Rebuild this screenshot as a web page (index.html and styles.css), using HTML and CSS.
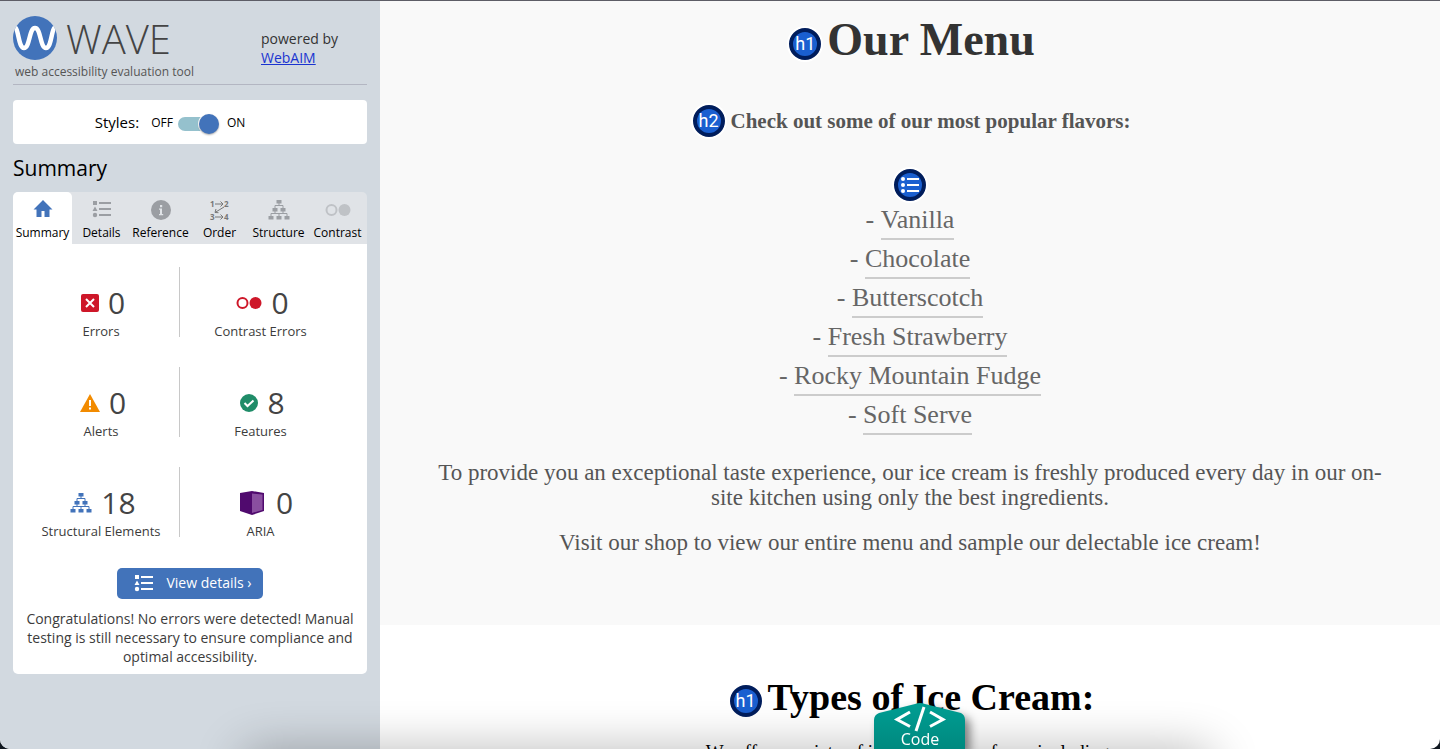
FILE: index.html
```html
<!DOCTYPE html>
<html lang="en">
<head>
<meta charset="utf-8">
<title>WAVE – Our Menu</title>
<link rel="stylesheet" href="styles.css">
</head>
<body>
<svg class="defs" aria-hidden="true">
  <symbol id="i-list" viewBox="0 0 20 18"><path d="M1 1h4v4H1zM3 6.500 5.500 11h-5zM7 2h12v2H7zM7 8h12v2H7zM7 14h12v2H7z"/><circle cx="3" cy="15" r="2.200"/></symbol>
  <symbol id="i-tree" viewBox="0 0 22 20"><path d="M8.500 0h5v3.500h-5zM4.500 8h5v3.500h-5zM12.500 8h5v3.500h-5zM.5 16h5v3.500H.5zM8.500 16h5v3.500h-5zM16.500 16h5v3.500h-5z"/><path d="M11 3v3M7 8V5.500h8V8M7 11v2.500M15 11v2.500M3 16v-2.500h16V16M11 13.500V16" fill="none" stroke="currentColor"/></symbol>
  <symbol id="i-contrast" viewBox="0 0 26 14"><circle cx="6.500" cy="7" r="5" fill="none" stroke="currentColor" stroke-width="2"/><circle cx="19.500" cy="7" r="6"/></symbol>
</svg>
<div class="window">
  <aside class="sidebar">
    <header class="brand">
      <div class="brand-name">
        <div class="brand-row">
          <svg class="logo" viewBox="0 0 44 44"><defs><clipPath id="disc"><circle cx="22" cy="22" r="22"/></clipPath></defs><circle cx="22" cy="22" r="22" fill="#4273ba"/><path clip-path="url(#disc)" d="M1 11C6 11 5 32 11 32S16 12 22 12s5 20 11 20S38 11 43 11" fill="none" stroke="#fff" stroke-width="4.500"/></svg>
          <span class="wordmark">WAVE</span>
        </div>
        <p class="tagline">web accessibility evaluation tool</p>
      </div>
      <p class="powered">powered by<br><a href="#">WebAIM</a></p>
    </header>
    <div class="styles-box">
      <label class="styles-label" for="styles">Styles:</label>
      <span>OFF</span>
      <input class="switch" id="styles" type="checkbox" checked>
      <span>ON</span>
    </div>
    <h2 class="side-title">Summary</h2>
    <nav class="tabs">
      <button class="tab active" type="button"><svg width="20" height="20" viewBox="0 0 20 20"><path d="M10 0 .5 9.500h3V17h5v-6h3v6h5V9.500h3z"/></svg><span>Summary</span></button>
      <button class="tab" type="button"><svg width="20" height="18"><use href="#i-list"/></svg><span>Details</span></button>
      <button class="tab" type="button"><svg width="20" height="20" viewBox="0 0 20 20"><circle cx="10" cy="10" r="10"/><path fill="#e0e3e7" d="M9 5h2.200v2.200H9zM8 8.500h3V14h1.200v1.200H8V14h1V9.700H8z"/></svg><span>Reference</span></button>
      <button class="tab" type="button"><svg class="order" width="20" height="22" viewBox="0 0 20 22"><text x="0" y="7">1</text><text x="14" y="7">2</text><text x="0" y="20">3</text><text x="14" y="20">4</text><path d="M5 4h8M10.500 1.500 13 4l-2.500 2.500M5 17h8M10.500 14.500 13 17l-2.500 2.500M14 7l-9 5.500M6 9 5 12.500l3.500.2"/></svg><span>Order</span></button>
      <button class="tab" type="button"><svg width="22" height="20"><use href="#i-tree"/></svg><span>Structure</span></button>
      <button class="tab faint" type="button"><svg width="26" height="20"><use href="#i-contrast"/></svg><span>Contrast</span></button>
    </nav>
    <section class="panel">
      <ul class="stats">
        <li class="stat"><span class="count"><svg width="18" height="18" viewBox="0 0 18 18"><rect width="18" height="18" rx="2" fill="#ce1729"/><path d="m5 5 8 8m0-8-8 8" stroke="#fff" stroke-width="2"/></svg>0</span>Errors</li>
        <li class="stat"><span class="count red"><svg width="26" height="14"><use href="#i-contrast"/></svg>0</span>Contrast Errors</li>
        <li class="stat"><span class="count"><svg width="20" height="18" viewBox="0 0 20 18"><path fill="#f28b00" d="m10 0 10 18H0z"/><path fill="#fff" d="M9 6h2v6H9zM9 13.500h2v2H9z"/></svg>0</span>Alerts</li>
        <li class="stat"><span class="count"><svg width="18" height="18" viewBox="0 0 18 18"><circle cx="9" cy="9" r="9" fill="#1f8c68"/><path d="m4.500 9 3 3L13.500 6.500" fill="none" stroke="#fff" stroke-width="2"/></svg>8</span>Features</li>
        <li class="stat"><span class="count blue"><svg width="22" height="20"><use href="#i-tree"/></svg>18</span>Structural Elements</li>
        <li class="stat"><span class="count wide"><svg width="24" height="24" viewBox="0 0 24 24"><path fill="#500a6e" d="M0 2 12 0l12 2v18l-12 4-12-4z"/><path fill="#8a4fa0" d="m12 2.500 10.500 1V19L12 22z"/></svg>0</span>ARIA</li>
      </ul>
      <button class="view" type="button"><svg width="20" height="18"><use href="#i-list"/></svg>View details ›</button>
      <p class="message">Congratulations! No errors were detected! Manual testing is still necessary to ensure compliance and optimal accessibility.</p>
    </section>
  </aside>
  <main class="page">
    <section class="menu">
      <h1 class="menu-title"><span class="badge">h1</span>Our Menu</h1>
      <h2 class="menu-sub"><span class="badge">h2</span>Check out some of our most popular flavors:</h2>
      <span class="badge"><svg width="18" height="16" viewBox="0 0 18 16"><path d="M6 1h12v2H6zM6 7h12v2H6zM6 13h12v2H6z"/><circle cx="2" cy="2" r="2"/><circle cx="2" cy="8" r="2"/><circle cx="2" cy="14" r="2"/></svg></span>
      <ul class="flavors">
        <li>- <span class="flavor">Vanilla</span></li>
        <li>- <span class="flavor">Chocolate</span></li>
        <li>- <span class="flavor">Butterscotch</span></li>
        <li>- <span class="flavor">Fresh Strawberry</span></li>
        <li>- <span class="flavor">Rocky Mountain Fudge</span></li>
        <li>- <span class="flavor">Soft Serve</span></li>
      </ul>
      <p class="copy">To provide you an exceptional taste experience, our ice cream is freshly produced every day in our on-site kitchen using only the best ingredients.</p>
      <p class="copy">Visit our shop to view our entire menu and sample our delectable ice cream!</p>
    </section>
    <section class="types">
      <h1 class="types-title"><span class="badge">h1</span>Types of Ice Cream:</h1>
      <p class="types-copy">We offer a variety of items to choose from, including:</p>
    </section>
  </main>
  <div class="dock-shade"></div>
  <button class="code" type="button">
    <svg class="code-shape" viewBox="0 0 92 46" preserveAspectRatio="none"><defs><linearGradient id="teal" x2="0" y2="1"><stop offset="0" stop-color="#009e93"/><stop offset="1" stop-color="#00897f"/></linearGradient></defs><path fill="url(#teal)" d="M0 46V17q0-5 5-7L41 1q5-2 10 0l36 9q4 2 4 7v29z"/><path d="M36 9 23 16.500l13 7M50 4l-8 24M56 9l13 7.500-13 7" fill="none" stroke="#fff" stroke-width="3"/></svg>
    <span class="code-label">Code</span>
  </button>
</div>
</body>
</html>
```
FILE: styles.css
```css
* { box-sizing: border-box; }
body { margin: 0; background: #101820; font-family: "Open Sans", "Noto Sans", sans-serif; color: #3c3c3c; }
p, h1, h2, ul { margin: 0; padding: 0; font-weight: 400; }
ul { list-style: none; }
button { font: inherit; border: 0; padding: 0; cursor: pointer; }
svg { fill: currentColor; flex: none; }
.defs { position: absolute; width: 0; height: 0; }

.window { position: relative; display: flex; height: 100vh; overflow: hidden; border-top: 1px solid #5d5d66; border-radius: 0 0 10px 10px; background: #fff; }

.sidebar { flex: none; width: 380px; padding: 15px 13px 0; background: #d2d9e0; }
.brand { display: flex; justify-content: space-between; height: 69px; border-bottom: 1px solid #b3b6c2; }
.brand-row { display: flex; align-items: center; gap: 9px; height: 44px; }
.logo { width: 44px; height: 44px; }
.wordmark { padding-top: 2px; font-size: 40px; font-weight: 300; line-height: 40px; color: #444; }
.tagline { padding: 3px 0 0 2px; font-size: 12px; line-height: 18px; color: #555; }
.powered { width: 106px; padding-top: 13px; font-size: 14px; line-height: 19px; color: #333; }
.powered a { color: #1a34d0; }

.styles-box { display: flex; align-items: center; justify-content: center; gap: 5px; height: 44px; margin-top: 15px; padding-right: 40px; border-radius: 4px; background: #fff; color: #000; font-size: 12px; }
.styles-label { margin-right: 7px; font-size: 15px; }
.switch { appearance: none; width: 41px; height: 14px; margin: 3px 3px 0 0; border-radius: 7px; background: #95c1cd; display: flex; align-items: center; justify-content: flex-end; }
.switch::before { content: ""; width: 20px; height: 20px; flex: none; border-radius: 50%; background: #4273ba; box-shadow: 0 1px 2px #0005, 0 0 0 1px #fff; }
.side-title { margin: 9px 0; font-size: 21px; line-height: 30px; color: #000; }

.tabs { display: grid; grid-template-columns: repeat(6, 1fr); border-radius: 5px 5px 0 0; background: #e0e3e7; }
.tab { display: flex; flex-direction: column; align-items: center; justify-content: space-between; height: 52px; padding: 8px 0 1px; background: none; color: #9b9ea3; font-size: 12px; line-height: 20px; white-space: nowrap; }
.tab span { color: #000; }
.tab.active { border-radius: 5px 5px 0 0; background: #fff; color: #4273ba; }
.tab.faint { color: #bfc2c6; }
.order { overflow: visible; }
.order path { fill: none; stroke: #777; }
.order text { font-size: 8px; font-weight: 700; fill: #777; }

.panel { padding: 23px 8px 8px; border-radius: 0 0 5px 5px; background: #fff; text-align: center; }
.stats { display: grid; grid-template-columns: 159px 161px; row-gap: 30px; }
.stat { display: flex; flex-direction: column; align-items: center; justify-content: flex-end; height: 70px; font-size: 13px; line-height: 11px; }
.stat:nth-child(odd) { padding-left: 2px; border-right: 1px solid #c8c8c8; }
.count { display: flex; align-items: center; gap: 9px; padding: 0 0 3px 4px; font-size: 30px; line-height: 40px; color: #444; }
.count.red svg { color: #ce1729; }
.count.blue svg { color: #4273ba; }
.count.wide { gap: 12px; padding-left: 12px; }
.view { display: flex; align-items: center; gap: 12px; height: 31px; margin: 31px auto 10px; padding: 0 11px 2px 17px; border-radius: 5px; background: #4273ba; color: #fff; font-size: 14px; }
.message { padding: 0 3px; font-size: 14px; line-height: 19px; }

.page { flex: 1; min-width: 0; text-align: center; font-family: "Gentium Book Basic", "Liberation Serif", serif; }
.badge { display: inline-flex; align-items: center; justify-content: center; width: 32px; height: 32px; border: 4px solid #001d5c; border-radius: 50%; background: #1a5fd0; box-shadow: 0 0 0 2px #fff; color: #fff; font: 18px/24px Roboto, sans-serif; }
.menu { padding: 14px 50px 70px; background: #f9f9f9; }
.menu-title, .menu-sub, .types-title { display: flex; align-items: center; justify-content: center; gap: 6px; padding-left: 4px; }
.menu-title { color: #333; font-size: 46px; font-weight: 700; line-height: 50px; }
.menu-title .badge, .types-title .badge { margin-top: 8px; }
.menu-sub { margin: 39px 0 31px; padding-left: 3px; color: #555; font-size: 21px; font-weight: 700; line-height: 34px; }
.flavors { margin-bottom: 25px; color: #666; font-size: 26px; line-height: 37px; }
.flavor { display: inline-block; border-bottom: 2px solid #ccc; }
.copy { margin-bottom: 20px; color: #555; font-size: 23px; line-height: 25px; }
.copy:last-child { margin-bottom: 0; }
.types { padding-top: 47px; color: #000; }
.types-title { font-size: 38px; font-weight: 700; line-height: 50px; }
.types-copy { margin-top: 18px; font-size: 19px; line-height: 24px; }

.dock-shade { position: absolute; left: 17%; right: 16%; top: 100%; height: 40px; box-shadow: 0 4px 50px #0005; }
.code { position: absolute; left: 874px; bottom: 0; width: 92px; height: 46px; background: none; color: #fff; filter: drop-shadow(5px 5px 5px #0007); }
.code-shape { display: block; width: 100%; height: 100%; }
.code-label { position: absolute; inset: 24px 0 auto; font-size: 16px; line-height: 24px; }
```
